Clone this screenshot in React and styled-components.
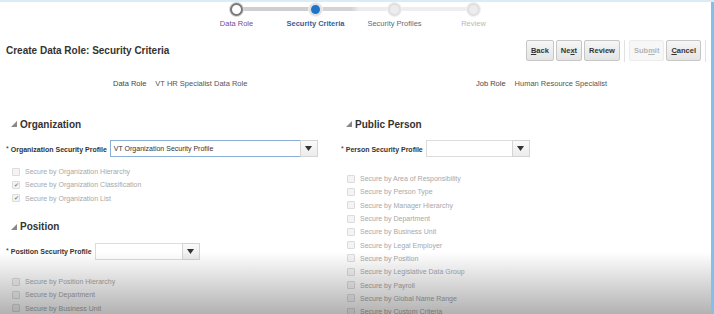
import React from 'react';
import styled, { createGlobalStyle } from 'styled-components';

const GlobalStyle = createGlobalStyle`
    html, body {
        margin: 0;
        padding: 0;
        background: #ffffff;
    }
    body {
        font-family: "Liberation Sans", Arial, sans-serif;
        color: #333;
    }
`;

const stops = [
    { label: 'Data Role', state: 'visited' },
    { label: 'Security Criteria', state: 'current' },
    { label: 'Security Profiles', state: 'next' },
    { label: 'Review', state: 'off' },
];

const orgChecks = [
    { label: 'Secure by Organization Hierarchy', checked: false },
    { label: 'Secure by Organization Classification', checked: true },
    { label: 'Secure by Organization List', checked: true },
];

const positionChecks = [
    'Secure by Position Hierarchy',
    'Secure by Department',
    'Secure by Business Unit',
];

const personChecks = [
    'Secure by Area of Responsibility',
    'Secure by Person Type',
    'Secure by Manager Hierarchy',
    'Secure by Department',
    'Secure by Business Unit',
    'Secure by Legal Employer',
    'Secure by Position',
    'Secure by Legislative Data Group',
    'Secure by Payroll',
    'Secure by Global Name Range',
    'Secure by Custom Criteria',
];

function Check({ label, checked }) {
    return (
        <CheckRow>
            <Box>{checked && <Tick>✔</Tick>}</Box>
            <span>{label}</span>
        </CheckRow>
    );
}

function Select({ value, width }) {
    return (
        <SelectWrap $width={width}>
            <SelectInput>{value}</SelectInput>
            <SelectButton>
                <svg width="7" height="5" viewBox="0 0 7 5"><path d="M0 0h7L3.5 5z" fill="#333" /></svg>
            </SelectButton>
        </SelectWrap>
    );
}

function SectionTitle({ children }) {
    return (
        <Heading>
            <svg width="6" height="6" viewBox="0 0 6 6"><path d="M6 0v6H0z" fill="#888" /></svg>
            {children}
        </Heading>
    );
}

export default function App() {
    return (
        <Page>
            <GlobalStyle />
            <Train>
                {stops.map((s, i) => (
                    <Stop key={s.label} $state={s.state} $first={i === 0}>
                        <Dot $state={s.state} />
                        <StopLabel $state={s.state}>{s.label}</StopLabel>
                    </Stop>
                ))}
            </Train>

            <HeaderRow>
                <Title>Create Data Role: Security Criteria</Title>
                <Buttons>
                    <Button><u>B</u>ack</Button>
                    <Button>Ne<u>x</u>t</Button>
                    <Button>Review</Button>
                    <Divider />
                    <Button disabled>Sub<u>m</u>it</Button>
                    <Button><u>C</u>ancel</Button>
                    <Divider />
                </Buttons>
            </HeaderRow>

            <InfoRow>
                <InfoItem $left={113}>
                    <InfoLabel>Data Role</InfoLabel>
                    <span>VT HR Specialist Data Role</span>
                </InfoItem>
                <InfoItem $left={476}>
                    <InfoLabel>Job Role</InfoLabel>
                    <span>Human Resource Specialist</span>
                </InfoItem>
            </InfoRow>

            <Columns>
                <Column>
                    <SectionTitle>Organization</SectionTitle>
                    <FieldRow>
                        <FieldLabel><Star>*</Star>Organization Security Profile</FieldLabel>
                        <Select value="VT Organization Security Profile" width={208} />
                    </FieldRow>
                    <CheckList $top={11}>
                        {orgChecks.map((c) => <Check key={c.label} {...c} />)}
                    </CheckList>

                    <SectionTitle>Position</SectionTitle>
                    <FieldRow>
                        <FieldLabel><Star>*</Star>Position Security Profile</FieldLabel>
                        <Select value="" width={105} />
                    </FieldRow>
                    <CheckList $top={18}>
                        {positionChecks.map((c) => <Check key={c} label={c} />)}
                    </CheckList>
                </Column>

                <Column $right>
                    <SectionTitle>Public Person</SectionTitle>
                    <FieldRow>
                        <FieldLabel><Star>*</Star>Person Security Profile</FieldLabel>
                        <Select value="" width={104} />
                    </FieldRow>
                    <CheckList $top={18}>
                        {personChecks.map((c) => <Check key={c} label={c} />)}
                    </CheckList>
                </Column>
            </Columns>

            <Shade />
            <EdgeBar />
        </Page>
    );
}

const Page = styled.div`
    position: relative;
    width: 714px;
    height: 314px;
    overflow: hidden;
    background: #fff;
    border-top: 2px solid #dcecf7;
    box-sizing: border-box;
`;

const Train = styled.div`
    display: flex;
    padding-left: 197px;
    padding-top: 1px;
    height: 36px;
`;

const Stop = styled.div`
    position: relative;
    width: 79px;
    display: flex;
    flex-direction: column;
    align-items: center;

    &::before {
        content: '';
        display: ${(p) => (p.$first ? 'none' : 'block')};
        position: absolute;
        top: 4px;
        right: 50%;
        width: 100%;
        height: 4px;
        background: ${(p) => (p.$state === 'current' ? '#cfcfcf' : p.$state === 'next' ? 'linear-gradient(90deg, #d4d4d4 45%, #ededed 55%)' : '#eeeeee')};
    }
`;

const Dot = styled.div`
    position: relative;
    z-index: 1;
    width: 9px;
    height: 9px;
    border-radius: 50%;
    background: ${(p) => (p.$state === 'current' ? '#1f74c9' : p.$state === 'visited' ? '#fff' : '#ececec')};
    border: 2px solid ${(p) => (p.$state === 'visited' ? '#7a7a7a' : '#e0e0e0')};
    box-shadow: ${(p) => (p.$state === 'visited' ? '0 0 0 1px #d8d8d8' : '0 0 0 1px #f0f0f0')};
`;

const StopLabel = styled.div`
    margin-top: 3px;
    font-size: 7.5px;
    white-space: nowrap;
    color: ${(p) =>
        p.$state === 'visited' ? '#7a4e8c' : p.$state === 'current' ? '#2f63a0' : p.$state === 'next' ? '#5c6d80' : '#b8b8b8'};
    font-weight: ${(p) => (p.$state === 'current' ? 'bold' : 'normal')};
`;

const HeaderRow = styled.div`
    display: flex;
    align-items: center;
    justify-content: space-between;
    padding-left: 6px;
    padding-right: 6px;
    height: 23px;
`;

const Title = styled.h1`
    margin: 0;
    font-size: 10px;
    font-weight: bold;
    color: #333;
`;

const Buttons = styled.div`
    display: flex;
    align-items: center;
    gap: 2px;
`;

const Button = styled.button`
    height: 21px;
    padding: 0 4px;
    margin: 0;
    font-family: inherit;
    font-size: 7.5px;
    font-weight: bold;
    color: ${(p) => (p.disabled ? '#b4b4b4' : '#333')};
    background: ${(p) => (p.disabled ? '#f7f7f7' : 'linear-gradient(#f6f6f6, #e4e4e4)')};
    border: 1px solid ${(p) => (p.disabled ? '#ececec' : '#c6c6c6')};
    border-radius: 2px;
`;

const Divider = styled.div`
    width: 1px;
    height: 22px;
    margin: 0 2px;
    background: #e2e2e2;
`;

const InfoRow = styled.div`
    display: flex;
    margin-top: 17px;
    height: 12px;
    font-size: 7.5px;
    color: #555;
`;

const InfoItem = styled.div`
    position: absolute;
    left: ${(p) => p.$left}px;
    display: flex;
    gap: 9px;
`;

const InfoLabel = styled.span`
    color: #444;
`;

const Columns = styled.div`
    display: flex;
    margin-top: 25px;
`;

const Column = styled.div`
    display: flex;
    flex-direction: column;
    width: ${(p) => (p.$right ? '370px' : '340px')};
    padding-left: ${(p) => (p.$right ? '1px' : '6px')};
    box-sizing: border-box;
`;

const Heading = styled.h2`
    display: flex;
    align-items: center;
    gap: 3px;
    margin: 0 0 0 5px;
    height: 16px;
    font-size: 10px;
    font-weight: bold;
    color: #333;
`;

const FieldRow = styled.div`
    display: flex;
    align-items: center;
    gap: 3px;
    margin-top: 8px;
`;

const FieldLabel = styled.label`
    font-size: 7px;
    font-weight: bold;
    color: #333;
    white-space: nowrap;
`;

const Star = styled.span`
    font-weight: normal;
    margin-right: 2px;
    vertical-align: 1px;
`;

const SelectWrap = styled.div`
    display: flex;
    width: ${(p) => p.$width}px;
    height: 17px;
`;

const SelectInput = styled.div`
    flex: 1;
    display: flex;
    align-items: center;
    padding-left: 3px;
    font-size: 7px;
    color: #333;
    border: 1px solid ${(p) => (p.children ? '#8aaed6' : '#dcdcdc')};
    border-right: none;
`;

const SelectButton = styled.div`
    width: 16px;
    display: flex;
    align-items: center;
    justify-content: center;
    border: 1px solid #d4d4d4;
    background: linear-gradient(#fafafa, #ececec);
`;

const CheckList = styled.div`
    display: flex;
    flex-direction: column;
    gap: 6px;
    margin-top: ${(p) => p.$top}px;
    margin-bottom: 17px;
    margin-left: 6px;
`;

const CheckRow = styled.div`
    display: flex;
    align-items: center;
    gap: 5px;
    height: 7.3px;
    font-size: 7px;
    color: #a8a8a8;
    white-space: nowrap;
`;

const Box = styled.span`
    display: flex;
    align-items: center;
    justify-content: center;
    width: 6px;
    height: 6px;
    border: 1px solid #dcdcdc;
    background: #f4f4f4;
    border-radius: 1px;
`;

const Tick = styled.span`
    font-size: 6px;
    line-height: 1;
    color: #888;
`;

const Shade = styled.div`
    position: absolute;
    left: 0;
    right: 0;
    bottom: 0;
    height: 62px;
    background: linear-gradient(rgba(0, 0, 0, 0), rgba(0, 0, 0, 0.3));
    pointer-events: none;
`;

const EdgeBar = styled.div`
    position: absolute;
    top: 0;
    right: 0;
    bottom: 0;
    width: 3px;
    background: #7fc1ec;
`;
